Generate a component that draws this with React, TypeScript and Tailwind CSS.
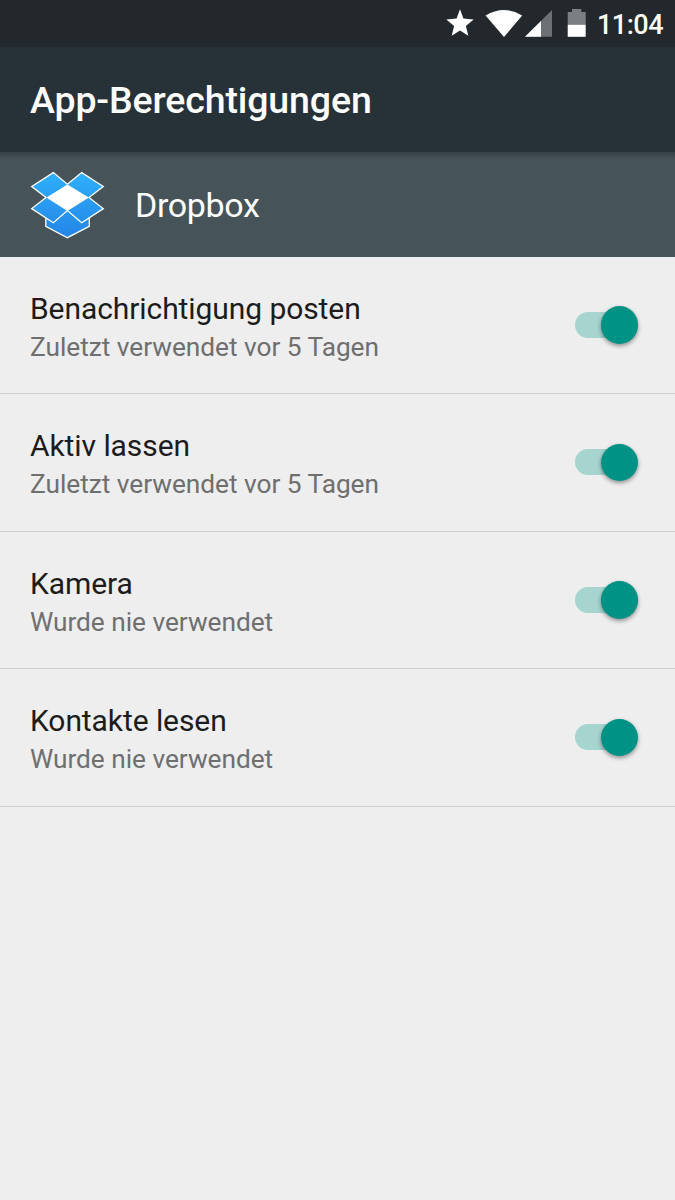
const items = [
  { title: "Benachrichtigung posten", note: "Zuletzt verwendet vor 5 Tagen" },
  { title: "Aktiv lassen", note: "Zuletzt verwendet vor 5 Tagen" },
  { title: "Kamera", note: "Wurde nie verwendet" },
  { title: "Kontakte lesen", note: "Wurde nie verwendet" },
];

function Toggle() {
  return (
    <div className="flex h-[26px] w-[63.500px] items-center rounded-full">
      <div className="flex h-[26px] w-[50px] items-center rounded-full bg-[#a6d4cf]">
        <div className="ml-[26px] h-[37.500px] w-[37.500px] shrink-0 rounded-full bg-[#009385] shadow-[0_2px_4px_rgba(0,0,0,0.4)]" />
      </div>
    </div>
  );
}

function StatusIcons() {
  return (
    <svg className="h-[47px] w-[146px] shrink-0" viewBox="441 0 146 47">
      <path d="M460 9.300l3.400 9.300 10.300.8-7.800 6.500 2.400 9.900-8.300-5.300-8.300 5.300 2.400-9.900-7.800-6.500 10.300-.8z" fill="#fff" />
      <path d="M485.600 15.500Q504 4.500 522.200 15.500L504 37z" fill="#fff" />
      <path d="M552 10V36.800H525z" fill="#6d7173" />
      <path d="M541 20.900V36.800H525z" fill="#fff" />
      <path d="M572 9h9.300v3h4.400v12.700h-18V12h4.300z" fill="#7b7f81" />
      <path d="M567.700 24.700h18v12.100h-18z" fill="#fff" />
    </svg>
  );
}

function DropboxLogo() {
  return (
    <svg className="h-[70px] w-[75px] shrink-0" viewBox="30 170 75 70">
      <defs>
        <linearGradient id="blue" gradientUnits="userSpaceOnUse" x1="0" y1="172" x2="0" y2="238">
          <stop offset="0" stopColor="#2fb0fc" />
          <stop offset="1" stopColor="#2484e6" />
        </linearGradient>
      </defs>
      <g fill="url(#blue)" stroke="#fff" strokeWidth="1.300">
        <path d="M45.800 214v12.300l21.600 11.400 21.900-11.400V214L67.400 206z" />
        <path d="M53.300 172.600l14.100 11.600 14.300-11.600 21.600 13.900-14.300 11.100 14.300 11-21.600 14.200-14.300-12.200-14.100 12.200-21.600-14.200 14.300-11-14.300-11.100z" />
      </g>
      <path d="M67.400 185l20.600 12.600-20.600 12.900-20.200-12.900z" fill="#fff" stroke="#fff" strokeWidth="1" />
    </svg>
  );
}

export default function App() {
  return (
    <div className="flex h-[1200px] w-[675px] flex-col overflow-hidden bg-[#eeeeee] font-['Roboto',sans-serif]">
      <div className="flex h-[47px] shrink-0 items-center bg-[#22282b] pl-[441px]">
        <StatusIcons />
        <span className="ml-[10px] pt-[4px] text-[27px] font-medium leading-none tracking-[-0.5px] text-white">11:04</span>
      </div>
      <header className="flex h-[105px] shrink-0 items-center bg-[#273238] pl-[30px] pt-[3px]">
        <h1 className="text-[37.500px] font-medium leading-none tracking-[-0.12px] text-white">App-Berechtigungen</h1>
      </header>
      <div className="flex h-[104.500px] shrink-0 items-center bg-[#46545a] bg-linear-to-b from-[#364147] to-[#46545a] to-[8px] pl-[30px] pt-[1.500px]">
        <DropboxLogo />
        <span className="ml-[30px] text-[34px] leading-none tracking-[-0.35px] text-white">Dropbox</span>
      </div>
      {items.map((item) => (
        <div
          key={item.title}
          className="flex h-[137.500px] shrink-0 items-center justify-between border-b border-[#cecece] pl-[30px] pr-[37px]"
        >
          <div className="pt-[5.500px]">
            <div className="text-[30px] leading-[38px] tracking-[-0.08px] text-[#1c1c1c]">{item.title}</div>
            <div className="text-[26.250px] leading-[38px] tracking-[-0.03px] text-[#6f6f6f]">{item.note}</div>
          </div>
          <Toggle />
        </div>
      ))}
    </div>
  );
}
